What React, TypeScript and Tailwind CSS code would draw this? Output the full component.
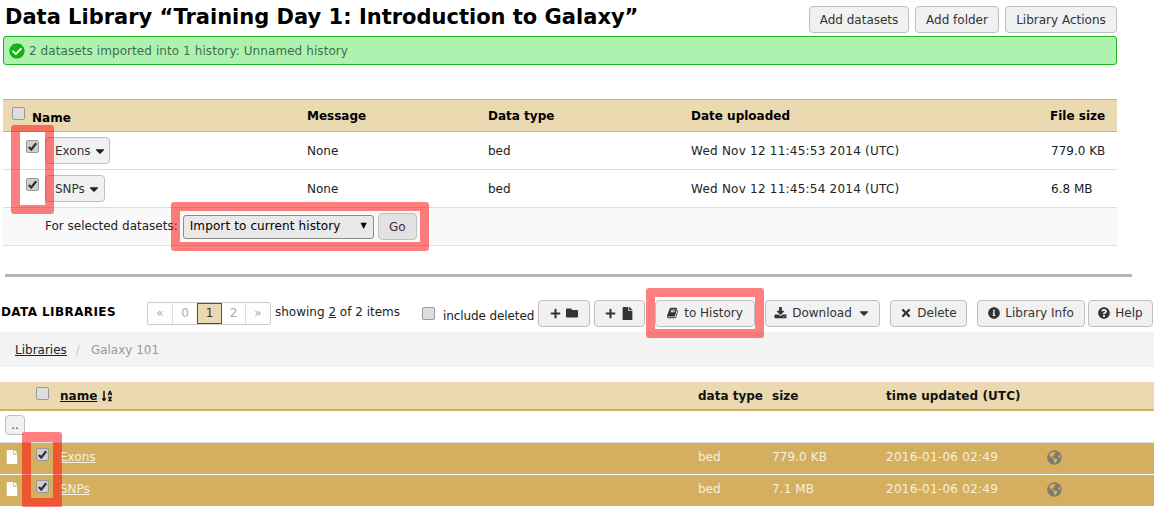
import React from 'react';
import {
  FaCaretDown,
  FaCheckCircle,
  FaFile,
  FaFolder,
  FaGlobeAmericas,
  FaInfoCircle,
  FaPlus,
  FaQuestionCircle,
  FaSortAlphaDown,
  FaTimes,
} from 'react-icons/fa';

function Check({ checked = false }: { checked?: boolean }) {
  return (
    <span className={`flex w-[13px] h-[13px] shrink-0 items-center justify-center rounded-[2px] border border-[#9a9a9a] ${checked ? 'bg-[#cfcfcf]' : 'bg-[#dedede]'}`}>
      {checked && (
        <svg viewBox="0 0 12 12" className="w-[11px] h-[11px]">
          <path d="M2 6.5 L4.7 9.3 L10 2.5" fill="none" stroke="#333" strokeWidth="2.4" />
        </svg>
      )}
    </span>
  );
}

function BookIcon() {
  return (
    <svg viewBox="0 0 1792 1792" className="w-[12px] h-[12px]" fill="currentColor">
      <path d="M1639 478q40 57 18 129l-275 906q-19 64-76.5 107.5t-122.5 43.5h-923q-77 0-148.5-53.5t-99.5-131.5q-24-67-2-127 0-4 3-27t4-37q1-8-3-21.5t-3-19.5q2-11 8-21t16.5-23.5 16.5-23.5q23-38 45-91.5t30-91.5q3-10 .5-30t-.5-28q3-11 17-28t17-23q21-36 42-92t25-90q1-9-2.5-32t.5-28q4-13 22-30.5t22-22.5q19-26 42.5-84.5t27.5-96.5q1-8-3-25.5t-2-26.5q2-8 9-18t18-23 17-21q8-12 16.5-30.5t15-35 16-36 19.5-32 26.5-23.5 36-11.5 47.5 5.5l-1 3q38-9 51-9h761q74 0 114 56t18 130l-274 906q-36 119-71.5 153.5t-128.5 34.5h-869q-27 0-38 15-11 16-1 43 24 70 144 70h923q29 0 56-15.5t35-41.5l300-987q7-22 5-57 38 15 59 43zm-1064 2q-4 13 2 22.5t20 9.5h608q13 0 25.5-9.5t16.5-22.5l21-64q4-13-2-22.5t-20-9.5h-608q-13 0-25.5 9.5t-16.5 22.5zm-83 256q-4 13 2 22.5t20 9.5h608q13 0 25.5-9.5t16.5-22.5l21-64q4-13-2-22.5t-20-9.5h-608q-13 0-25.5 9.5t-16.5 22.5z" />
    </svg>
  );
}

function DownloadIcon() {
  return (
    <svg viewBox="0 0 1792 1792" className="w-[13px] h-[13px]" fill="currentColor">
      <path d="M1344 1344q0-26-19-45t-45-19-45 19-19 45 19 45 45 19 45-19 19-45zm256 0q0-26-19-45t-45-19-45 19-19 45 19 45 45 19 45-19 19-45zm128-224v320q0 40-28 68t-68 28h-1472q-40 0-68-28t-28-68v-320q0-40 28-68t68-28h465l135 136q58 56 136 56t136-56l136-136h464q40 0 68 28t28 68zm-325-569q17 41-14 70l-448 448q-18 19-45 19t-45-19l-448-448q-31-29-14-70 17-39 59-39h256v-448q0-26 19-45t45-19h256q26 0 45 19t19 45v448h256q42 0 59 39z" />
    </svg>
  );
}

function Btn({ className, children }: { className: string; children: React.ReactNode }) {
  return (
    <div className={`flex shrink-0 items-center justify-center gap-[5px] rounded-[4px] border border-[#bfbfbf] bg-[#f1f1f1] text-[12px] text-[#333] ${className}`}>
      {children}
    </div>
  );
}

const topCols = 'grid grid-cols-[304px_181px_203px_359px_67px] items-center';
const libCols = 'grid grid-cols-[56px_642px_74px_114px_160px_108px] items-center';

function TopRow({ name, width, size, date }: { name: string; width: string; size: string; date: string }) {
  return (
    <div className={`${topCols} h-[38px] border-b border-[#dddddd] text-[12px] text-[#222]`}>
      <div className="flex items-center">
        <div className="ml-[23px] mb-[8px]"><Check checked /></div>
        <Btn className={`ml-[6px] h-[27px] !justify-start !gap-[2px] pl-[9px] ${width} text-[12px]`}>
          {name}
          <FaCaretDown className="text-[14px] text-[#222]" />
        </Btn>
      </div>
      <div>None</div>
      <div>bed</div>
      <div className="tracking-[0.23px]">{date}</div>
      <div className="pl-[1px]">{size}</div>
    </div>
  );
}

function LibRow({ name, size }: { name: string; size: string }) {
  return (
    <div className={`${libCols} h-[31px] mb-[1px] bg-[#d4af60] pb-[3px] text-[12px] text-[#f6f0de]`}>
      <div className="flex items-center pl-[5px]">
        <FaFile className="text-[14px] text-white" />
        <div className="ml-[17px] mb-[6px]"><Check checked /></div>
      </div>
      <div className="ml-[4px] underline">{name}</div>
      <div>bed</div>
      <div className="tracking-[0.1px]">{size}</div>
      <div className="tracking-[0.25px]">2016-01-06 02:49</div>
      <div className="pl-[1px]"><FaGlobeAmericas className="text-[15px] text-[#7f7a6e]" /></div>
    </div>
  );
}

export default function App() {
  return (
    <div className="relative h-[507px] w-[1154px] overflow-hidden bg-white font-['DejaVu_Sans',sans-serif] text-[12px] text-black">
      {/* Title + actions */}
      <div className="flex h-[36px] items-start pl-[5px] pr-[37px]">
        <h1 className="mt-[3px] text-[21px] font-bold leading-[28px]">Data Library “Training Day 1: Introduction to Galaxy”</h1>
        <div className="ml-auto mt-[6px] flex gap-[6px]">
          <Btn className="h-[27px] w-[100px]">Add datasets</Btn>
          <Btn className="h-[27px] w-[84px]">Add folder</Btn>
          <Btn className="h-[27px] w-[112px]">Library Actions</Btn>
        </div>
      </div>

      {/* Message */}
      <div className="mx-[3px] flex h-[29px] w-[1114px] items-center gap-[3px] rounded-[3px] border border-[#20b420] bg-[#aff1af] pl-[5px] text-[12px] text-[#3f6f4f]">
        <span className="flex h-[16px] w-[16px] items-center justify-center rounded-full bg-white">
          <FaCheckCircle className="text-[16px] text-[#12b312]" />
        </span>
        <span className="ml-[1px] tracking-[0.08px]">2 datasets imported into 1 history: Unnamed history</span>
      </div>

      {/* Dataset table */}
      <div className="ml-[3px] mt-[34px] w-[1114px]">
        <div className={`${topCols} h-[32px] border-t border-[#d1b06f] bg-[#ebd9b2] font-bold`}>
          <div className="flex items-center">
            <div className="ml-[9px] mb-[4px]"><Check /></div>
            <span className="ml-[7px] mt-[4px]">Name</span>
          </div>
          <div>Message</div>
          <div>Data type</div>
          <div>Date uploaded</div>
          <div>File size</div>
        </div>
        <div className="h-[1px] bg-[#d8b56a]" />
        <TopRow name="Exons" width="w-[65px]" size="779.0 KB" date="Wed Nov 12 11:45:53 2014 (UTC)" />
        <TopRow name="SNPs" width="w-[60px]" size="6.8 MB" date="Wed Nov 12 11:45:54 2014 (UTC)" />
        <div className="flex h-[38px] items-center border-b border-[#dddddd] bg-[#f9f9f9] pl-[42px] text-[#222]">
          <span className="mb-[2px]">For selected datasets:</span>
          <div className="ml-[5px] flex h-[24px] w-[191px] items-center justify-between rounded-[3px] border border-[#8a8a8a] bg-[#e9e9e9] pl-[6px] pr-[6px] text-[12px] text-black">
            <span className="mb-[2px] tracking-[0.12px]">Import to current history</span>
            <span className="mb-[2px] text-[8px]">▼</span>
          </div>
          <Btn className="ml-[4px] h-[27px] w-[39px] !bg-[#e2e2e2]">Go</Btn>
        </div>
      </div>

      {/* Divider */}
      <div className="ml-[5px] mt-[28px] h-[3px] w-[1127px] bg-[#b5b5b5]" />

      {/* Library toolbar */}
      <div className="mt-[21px] flex h-[30px] items-center pl-[1px]">
        <div className="mb-[2px] w-[146px] text-[12px] font-bold tracking-[0.4px]">DATA LIBRARIES</div>
        <div className="flex h-[23px] w-[124px] rounded-[2px] border border-[#cccccc] text-[12px] text-[#aaa]">
          <div className="flex w-[25px] items-center justify-center border-r border-[#dddddd]">«</div>
          <div className="flex w-[24px] items-center justify-center">0</div>
          <div className="flex w-[25px] items-center justify-center border border-[#1f5a8c] bg-[#ebd9b2] text-[#333]">1</div>
          <div className="flex w-[24px] items-center justify-center border-r border-[#dddddd]">2</div>
          <div className="flex flex-1 items-center justify-center">»</div>
        </div>
        <div className="ml-[4px] mb-[2px] w-[147px] text-[#222]">showing <u>2</u> of 2 items</div>
        <Check />
        <span className="ml-[8px] mt-[5px] w-[95px] tracking-[-0.1px] text-[#222]">include deleted</span>
        <Btn className="h-[27px] w-[52px]"><FaPlus className="text-[11px]" /><FaFolder className="text-[12px]" /></Btn>
        <Btn className="ml-[4px] h-[27px] w-[51px]"><FaPlus className="text-[11px]" /><FaFile className="text-[13px]" /></Btn>
        <Btn className="ml-[10px] h-[27px] w-[100px]"><BookIcon />to History</Btn>
        <Btn className="ml-[10px] h-[27px] w-[115px]"><DownloadIcon />Download<FaCaretDown className="text-[14px]" /></Btn>
        <Btn className="ml-[10px] h-[27px] w-[77px]"><FaTimes className="text-[12px]" />Delete</Btn>
        <Btn className="ml-[10px] h-[27px] w-[108px]"><FaInfoCircle className="text-[12px]" />Library Info</Btn>
        <Btn className="ml-[3px] h-[27px] w-[65px]"><FaQuestionCircle className="text-[12px]" />Help</Btn>
      </div>

      {/* Breadcrumb */}
      <div className="mt-[4px] flex h-[35px] items-center bg-[#f3f3f3] pl-[15px] text-[12px]">
        <span className="text-[#222] underline">Libraries</span>
        <span className="ml-[9px] text-[#ccc]">/</span>
        <span className="ml-[11px] text-[#999]">Galaxy 101</span>
      </div>

      {/* Library table */}
      <div className="mt-[15px]">
        <div className={`${libCols} h-[29px] border-b-2 border-[#d4af60] bg-[#ebd9b2] font-bold text-[#111]`}>
          <div className="mb-[5px] pl-[36px]"><Check /></div>
          <div className="flex items-center gap-[4px] pl-[4px]"><u>name</u><FaSortAlphaDown className="text-[12px]" /></div>
          <div>data type</div>
          <div>size</div>
          <div className="tracking-[0.1px]">time updated (UTC)</div>
          <div />
        </div>
        <div className="flex h-[32px] items-center border-b border-[#dddddd] pl-[5px]">
          <Btn className="mb-[3px] h-[20px] w-[20px]">..</Btn>
        </div>
        <LibRow name="Exons" size="779.0 KB" />
        <LibRow name="SNPs" size="7.1 MB" />
      </div>

      {/* Tutorial highlights drawn over the screenshot */}
      <div className="absolute left-[11px] top-[125px] h-[89px] w-[43px] rounded-[3px] border-x-[9px] border-b-[9px] border-t-[7px] border-[#ff0000]/50" />
      <div className="absolute left-[171px] top-[202px] h-[49px] w-[258px] rounded-[3px] border-[9px] border-[#ff0000]/50" />
      <div className="absolute left-[646px] top-[288px] h-[50px] w-[118px] rounded-[3px] border-[9px] border-[#ff0000]/50" />
      <div className="absolute left-[22px] top-[432px] h-[76px] w-[40px] rounded-[3px] border-x-[9px] border-y-[10px] border-[#ff0000]/50" />
    </div>
  );
}
